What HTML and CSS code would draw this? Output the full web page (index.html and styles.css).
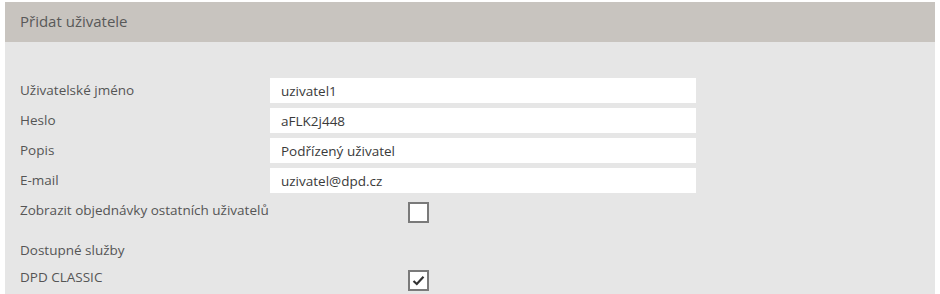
FILE: index.html
```html
<!DOCTYPE html>
<html lang="cs">
<head>
    <meta charset="UTF-8">
    <meta name="viewport" content="width=device-width, initial-scale=1.0">
    <title>Přidat uživatele</title>
    <link rel="stylesheet" href="styles.css">
</head>
<body>
    <div class="panel">
        <div class="panel-head">Přidat uživatele</div>
        <div class="panel-body">
            <div class="row">
                <label class="label">Uživatelské jméno</label>
                <input class="field" type="text" value="uzivatel1">
            </div>
            <div class="row">
                <label class="label">Heslo</label>
                <input class="field" type="text" value="aFLK2j448">
            </div>
            <div class="row">
                <label class="label">Popis</label>
                <input class="field" type="text" value="Podřízený uživatel">
            </div>
            <div class="row">
                <label class="label">E-mail</label>
                <input class="field" type="text" value="uzivatel@dpd.cz">
            </div>
            <div class="row row-check">
                <label class="label">Zobrazit objednávky ostatních uživatelů</label>
                <span class="check"></span>
            </div>
            <div class="row row-title">
                <span class="label">Dostupné služby</span>
            </div>
            <div class="row row-check row-last">
                <label class="label">DPD CLASSIC</label>
                <span class="check checked">
                    <svg width="13" height="11" viewBox="0 0 13 11"><path d="M1.5 6 L4.8 9 L11.5 1.8" fill="none" stroke="#333" stroke-width="2.2"/></svg>
                </span>
            </div>
        </div>
    </div>
</body>
</html>
```

FILE: styles.css
```css
* {
    margin: 0;
    padding: 0;
    box-sizing: border-box;
}
body {
    background: #fff;
    font-family: "Open Sans", Lato, sans-serif;
    font-size: 13.5px;
    color: #555;
    padding: 2px 5px 0;
}
.panel {
    width: 930px;
    background: #e6e6e6;
}
.panel-head {
    background: #c8c4bf;
    height: 40px;
    line-height: 39px;
    padding-left: 15px;
    font-size: 15px;
    color: #595959;
}
.panel-body {
    padding: 36px 15px 0;
}
.row {
    display: flex;
    align-items: center;
    height: 25px;
    margin-bottom: 5px;
}
.label {
    width: 250px;
    flex-shrink: 0;
    line-height: 25px;
}
.field {
    width: 426px;
    height: 25px;
    border: none;
    background: #fff;
    padding: 0 11px;
    font-family: inherit;
    font-size: 13.5px;
    color: #3a3a3a;
    outline: none;
}
.row-check {
    align-items: flex-start;
    height: 30px;
}
.row-check .label {
    white-space: nowrap;
}
.check {
    width: 21px;
    height: 21px;
    margin-left: 138px;
    margin-top: 4px;
    border: 2px solid #7a7a7a;
    background: #fff;
    display: flex;
    align-items: center;
    justify-content: center;
}
.row-title {
    margin-top: 10px;
    margin-bottom: 2px;
}
.row-last {
    margin-bottom: 0;
}
.row-last .check {
    margin-top: 5px;
}
```
